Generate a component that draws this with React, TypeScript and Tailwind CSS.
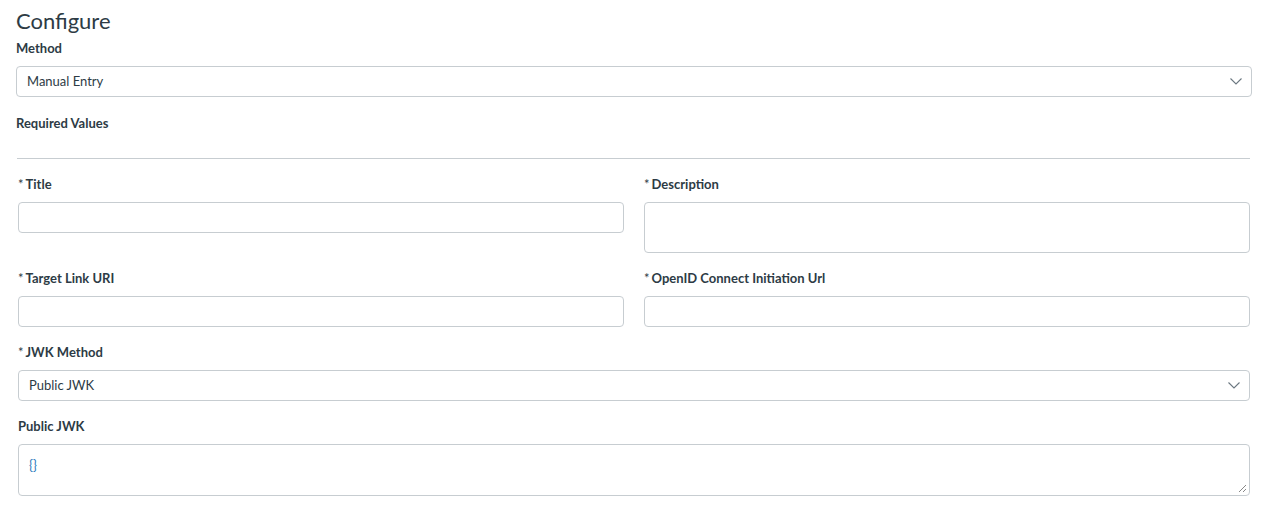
import React from "react";

const font = { fontFamily: "Lato, 'Noto Sans', sans-serif" };

function Label({ children, req }: { children: React.ReactNode; req?: boolean }) {
  return (
    <div className="text-[13px] font-bold leading-[18px] text-[#2d3b45] h-[18px]">
      {req && <span className="font-normal mr-[2px]">*</span>}
      {children}
    </div>
  );
}

function Chevron() {
  return (
    <svg width="12" height="7" viewBox="0 0 12 7" className="text-[#6b7780]">
      <path d="M0.5 0.5 L6 6 L11.5 0.5" fill="none" stroke="currentColor" strokeWidth="1.1" />
    </svg>
  );
}

function Select({ value }: { value: string }) {
  return (
    <div className="h-[31px] border border-[#c7cdd1] rounded-[4px] flex items-center justify-between pl-[10px] pr-[9px] bg-white">
      <span className="text-[13px] leading-[17px] text-[#2d3b45] -mt-[1px]">{value}</span>
      <Chevron />
    </div>
  );
}

export default function App() {
  return (
    <div style={font} className="bg-white w-[1273px] h-[507px] px-[16px] pt-[7px] text-[#2d3b45]">
      <h1 className="text-[22px] leading-[28px] font-normal text-[#2d3b45]">Configure</h1>
      <div className="mt-[4px]">
        <Label>Method</Label>
      </div>
      <div className="mt-[9px] w-[1236px]">
        <Select value="Manual Entry" />
      </div>
      <div className="mt-[17px]">
        <Label>Required Values</Label>
      </div>
      <div className="px-[1px] pr-[7px] mt-[26px]">
        <div className="h-px bg-[#c7cdd1] w-[1233px]"></div>
      </div>
      <div className="pl-[2px] w-[1234px] mt-[16px]">
        <div className="grid grid-cols-2 gap-x-[20px]">
          <div>
            <Label req>Title</Label>
            <div className="mt-[9px] h-[31px] border border-[#c7cdd1] rounded-[4px]"></div>
          </div>
          <div>
            <Label req>Description</Label>
            <div className="mt-[9px] h-[51px] border border-[#c7cdd1] rounded-[4px]"></div>
          </div>
        </div>
        <div className="grid grid-cols-2 gap-x-[20px] mt-[16px]">
          <div>
            <Label req>Target Link URI</Label>
            <div className="mt-[9px] h-[31px] border border-[#c7cdd1] rounded-[4px]"></div>
          </div>
          <div>
            <Label req>OpenID Connect Initiation Url</Label>
            <div className="mt-[9px] h-[31px] border border-[#c7cdd1] rounded-[4px]"></div>
          </div>
        </div>
        <div className="mt-[16px]">
          <Label req>JWK Method</Label>
        </div>
        <div className="mt-[9px]">
          <Select value="Public JWK" />
        </div>
        <div className="mt-[16px]">
          <Label>Public JWK</Label>
        </div>
        <div className="mt-[9px] relative h-[52px] border border-[#c7cdd1] rounded-[4px] pl-[10px] pt-[7px]">
          <span className="text-[13px] text-[#2b7abc]">{"{}"}</span>
          <svg className="absolute right-[2px] bottom-[2px]" width="9" height="9" viewBox="0 0 9 9">
            <path d="M8 1 L1 8 M8 5 L5 8" stroke="#888" strokeWidth="1" />
          </svg>
        </div>
      </div>
    </div>
  );
}
